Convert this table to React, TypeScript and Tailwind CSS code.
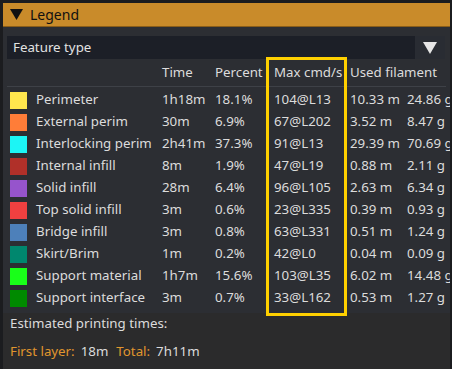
import React from "react";

interface Row {
  name: string;
  color: string;
  time: string;
  percent: string;
  maxCmd: string;
  length: string;
  weight: string;
}

const rows: Row[] = [
  { name: "Perimeter", color: "#FFE64D", time: "1h18m", percent: "18.1%", maxCmd: "104@L13", length: "10.33 m", weight: "24.86 g" },
  { name: "External perim", color: "#FF7D38", time: "30m", percent: "6.9%", maxCmd: "67@L202", length: "3.52 m", weight: "8.47 g" },
  { name: "Interlocking perim", color: "#1CF5F5", time: "2h41m", percent: "37.3%", maxCmd: "91@L13", length: "29.39 m", weight: "70.69 g" },
  { name: "Internal infill", color: "#B03029", time: "8m", percent: "1.9%", maxCmd: "47@L19", length: "0.88 m", weight: "2.11 g" },
  { name: "Solid infill", color: "#9654CC", time: "28m", percent: "6.4%", maxCmd: "96@L105", length: "2.63 m", weight: "6.34 g" },
  { name: "Top solid infill", color: "#F04040", time: "3m", percent: "0.6%", maxCmd: "23@L335", length: "0.39 m", weight: "0.93 g" },
  { name: "Bridge infill", color: "#4D80BA", time: "3m", percent: "0.8%", maxCmd: "63@L331", length: "0.51 m", weight: "1.24 g" },
  { name: "Skirt/Brim", color: "#00876E", time: "1m", percent: "0.2%", maxCmd: "42@L0", length: "0.04 m", weight: "0.09 g" },
  { name: "Support material", color: "#19FF19", time: "1h7m", percent: "15.6%", maxCmd: "103@L35", length: "6.02 m", weight: "14.48 g" },
  { name: "Support interface", color: "#008A00", time: "3m", percent: "0.7%", maxCmd: "33@L162", length: "0.53 m", weight: "1.27 g" },
];

const cols = "grid grid-cols-[26px_126px_53px_57px_78px_57px_60px] items-center";

const App: React.FC = () => {
  return (
    <div
      className="relative w-[452px] h-[369px] overflow-hidden bg-[#1b1c1f] text-[13.3px] text-[#dcdcdc]"
      style={{ fontFamily: '"Noto Sans", "Open Sans", sans-serif' }}
    >
      <div className="ml-[3px] mt-[3px] w-[447px] h-[366px] flex flex-col bg-[#2c2e33] overflow-hidden">
        {/* Header */}
        <div className="h-[24px] flex items-center bg-[#c98b2a] text-[#111] text-[14px] pl-[7px] gap-[7px] border-b border-[#8a5d18]">
          <svg width="13" height="11" viewBox="0 0 13 11">
            <polygon points="0,0 13,0 6.5,11" fill="#111" />
          </svg>
          <span>Legend</span>
        </div>

        {/* Combo */}
        <div className="mt-[9px] ml-[4px] mr-[5px] h-[23px] flex">
          <div className="flex-1 bg-[#1c1f27] flex items-center pl-[6px] text-[#e2e2e2]">Feature type</div>
          <div className="w-[30px] bg-[#292c33] flex items-center justify-center">
            <svg width="14" height="12" viewBox="0 0 14 12">
              <polygon points="0,0 14,0 7,12" fill="#e6e6e6" />
            </svg>
          </div>
        </div>

        {/* Column titles */}
        <div className={`${cols} h-[26px] mt-[1px] pl-[7px]`}>
          <span />
          <span />
          <span>Time</span>
          <span>Percent</span>
          <span className="pl-[2px]">Max cmd/s</span>
          <span className="col-span-2">Used filament</span>
        </div>
        <div className="mx-[4px] h-px bg-[#3e4147]" />

        {/* Rows */}
        <div className="flex flex-col pt-[2px] pl-[7px]">
          {rows.map((r) => (
            <div key={r.name} className={`${cols} h-[22px] whitespace-nowrap`}>
              <span className="w-[17px] h-[17px]" style={{ backgroundColor: r.color }} />
              <span>{r.name}</span>
              <span>{r.time}</span>
              <span>{r.percent}</span>
              <span className="pl-[2px]">{r.maxCmd}</span>
              <span>{r.length}</span>
              <span>{r.weight}</span>
            </div>
          ))}
        </div>

        {/* Footer */}
        <div className="flex-1 bg-[#2b2b2c] mt-[4px] pl-[7px]">
          <div className="h-[22px] flex items-center">Estimated printing times:</div>
          <div className="mt-[6px] h-[22px] flex items-center gap-[6px]">
            <span className="text-[#e0962e]">First layer:</span>
            <span className="mr-[2px]">18m</span>
            <span className="text-[#e0962e]">Total:</span>
            <span>7h11m</span>
          </div>
        </div>
      </div>

      {/* Highlight box */}
      <div className="absolute left-[266px] top-[57px] w-[81px] h-[259px] border-[3px] border-[#ffd000]" />
    </div>
  );
};

export default App;
